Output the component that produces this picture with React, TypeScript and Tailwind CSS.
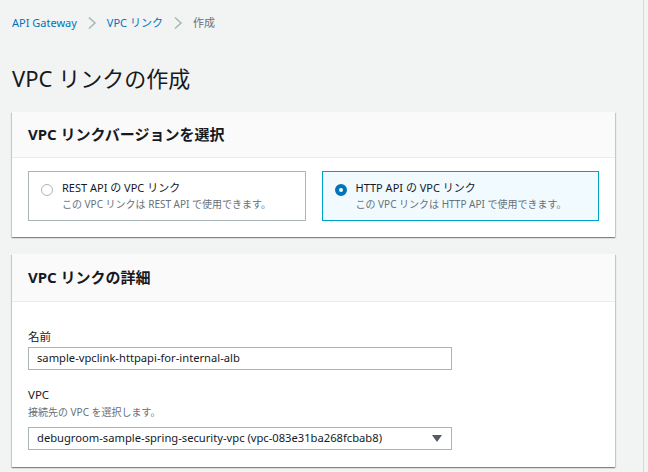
const FONT = { fontFamily: '"Noto Sans", "Noto Sans CJK JP", sans-serif' };

const versions = [
  {
    id: "rest",
    title: "REST API の VPC リンク",
    description: "この VPC リンクは REST API で使用できます。",
    selected: false,
  },
  {
    id: "http",
    title: "HTTP API の VPC リンク",
    description: "この VPC リンクは HTTP API で使用できます。",
    selected: true,
  },
];

function Chevron() {
  return (
    <svg width="10" height="14" viewBox="0 0 10 14" className="mx-[10px]">
      <path d="M2 1.5 L8 7 L2 12.5" fill="none" stroke="#aab7b8" strokeWidth="1.6" />
    </svg>
  );
}

function Card({ title, head, children }: { title: string; head: string; children: React.ReactNode }) {
  return (
    <div className="bg-white shadow-[0_1px_1px_0_rgba(0,28,36,0.3),1px_1px_1px_0_rgba(0,28,36,0.15),-1px_1px_1px_0_rgba(0,28,36,0.15)]">
      <div className={`flex ${head} items-center border-b border-[#eaeded] bg-[#fafafa] px-4`}>
        <h2 className="text-[15px] font-bold text-[#16191f]">{title}</h2>
      </div>
      {children}
    </div>
  );
}

export default function App() {
  return (
    <div style={FONT} className="flex h-[472px] w-[648px] overflow-hidden bg-[#f2f3f3]">
      <div className="w-[643px] shrink-0 pl-3 pr-[28px]">
        <nav className="flex h-[46px] items-center text-[11px]">
          <a className="text-[#0073bb]">API Gateway</a>
          <Chevron />
          <a className="text-[#0073bb]">VPC リンク</a>
          <Chevron />
          <span className="text-[#687078]">作成</span>
        </nav>
        <h1 className="mb-[18px] mt-[16px] text-[22px] leading-[32px] text-[#16191f]">VPC リンクの作成</h1>

        <Card title="VPC リンクバージョンを選択" head="h-[46px]">
          <div className="grid grid-cols-2 gap-4 px-4 pb-[16px] pt-[13px]">
            {versions.map((v) => (
              <div
                key={v.id}
                className={
                  v.selected
                    ? "flex h-[50px] items-start gap-[9px] border border-[#00a1c9] bg-[#f1faff] pl-[12px] pt-[8px]"
                    : "flex h-[50px] items-start gap-[9px] border border-[#aab7b8] bg-white pl-[12px] pt-[8px]"
                }
              >
                {v.selected ? (
                  <span className="mt-[4px] h-[12px] w-[12px] rounded-full border-[4px] border-[#0073bb] bg-white" />
                ) : (
                  <span className="mt-[4px] h-[12px] w-[12px] rounded-full border border-[#aab7b8] bg-white" />
                )}
                <div className="leading-[16px]">
                  <p className="text-[11px] text-[#16191f]">{v.title}</p>
                  <p className="text-[10px] text-[#687078]">{v.description}</p>
                </div>
              </div>
            ))}
          </div>
        </Card>

        <div className="h-[17px]" />

        <Card title="VPC リンクの詳細" head="h-[48px]">
          <div className="px-4 pb-[17px] pt-[26px]">
            <label className="block text-[11.5px] leading-[18px] text-[#16191f]">名前</label>
            <div className="mt-[1px] flex h-[23px] w-[424px] items-center border border-[#aab7b8] px-2 text-[11.2px] text-[#16191f]">
              sample-vpclink-httpapi-for-internal-alb
            </div>
            <label className="mt-[16px] block text-[11.5px] leading-[18px] text-[#16191f]">VPC</label>
            <p className="text-[10px] leading-[16px] text-[#687078]">接続先の VPC を選択します。</p>
            <div className="mt-[7px] flex h-[23px] w-[424px] items-center justify-between border border-[#aab7b8] pl-2 pr-[9px] text-[11.2px] text-[#16191f]">
              <span>debugroom-sample-spring-security-vpc (vpc-083e31ba268fcbab8)</span>
              <svg width="10" height="7" viewBox="0 0 10 7">
                <path d="M0 0 H10 L5 7 Z" fill="#545b64" />
              </svg>
            </div>
          </div>
        </Card>
      </div>
      <div className="flex-1 border-l border-[#d5dbdb]" />
    </div>
  );
}
